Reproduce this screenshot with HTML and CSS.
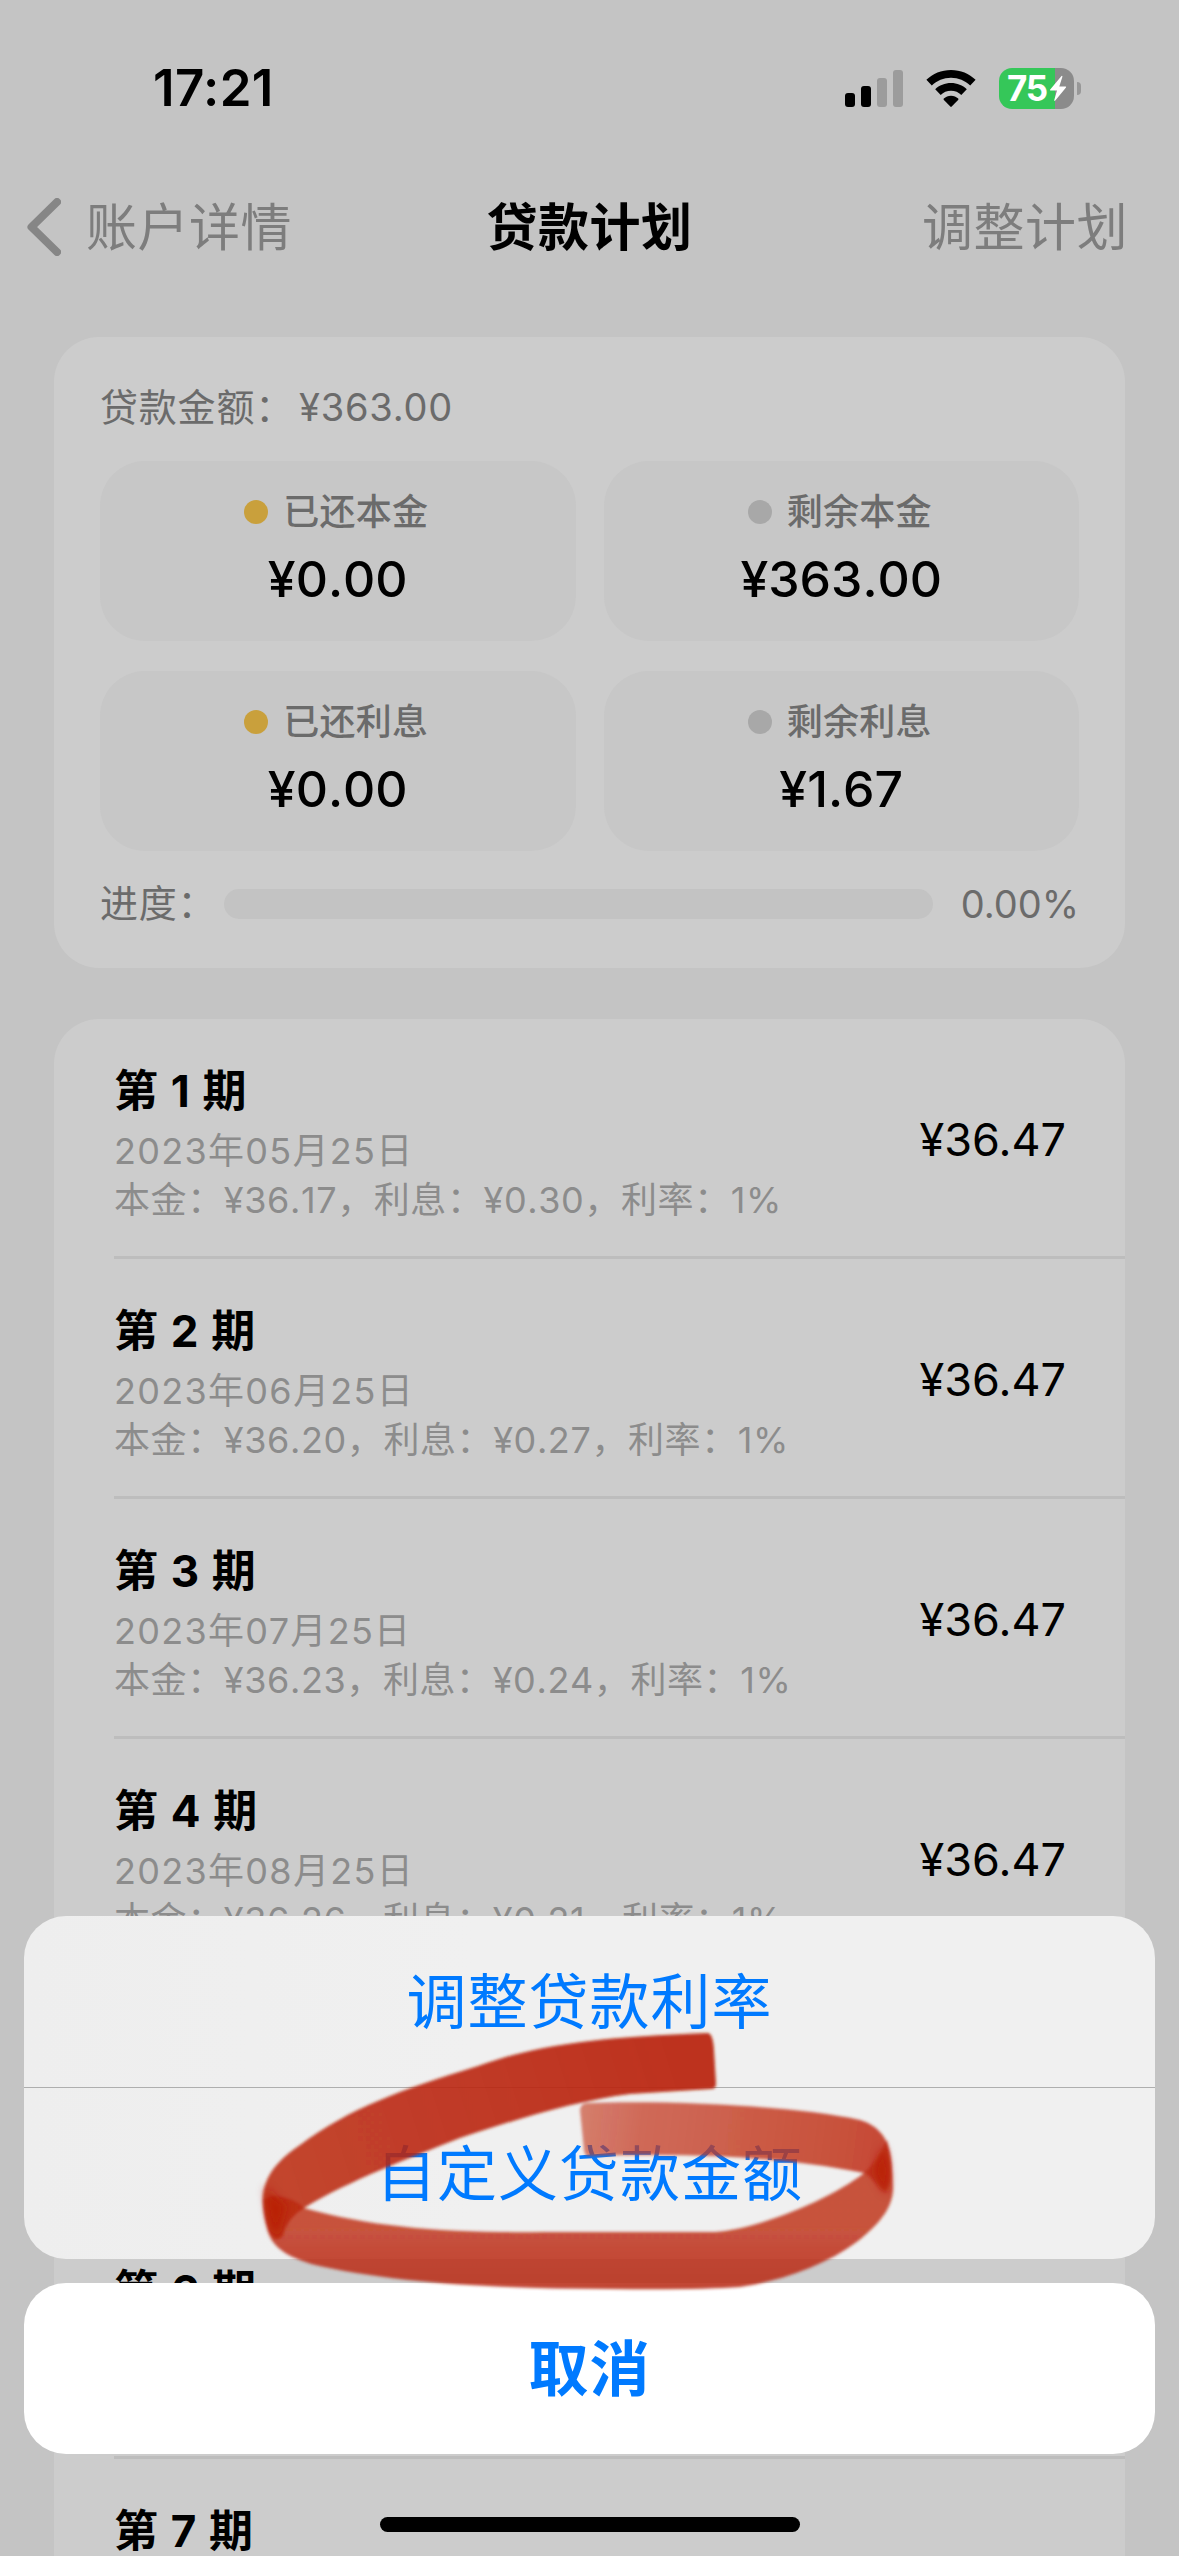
FILE: index.html
```html
<!DOCTYPE html>
<html lang="zh-CN">
<head>
<meta charset="utf-8">
<title>贷款计划</title>
<link rel="stylesheet" href="styles.css">
</head>
<body>
<div class="screen">
  <header class="status">
    <span class="clock">17:21</span>
    <div class="indicators">
      <svg class="signal" viewBox="0 0 58 37"><rect x="0" y="23" width="10" height="14" rx="3"/><rect x="16" y="16" width="10" height="21" rx="3"/><rect class="off" x="32" y="8" width="10" height="29" rx="3"/><rect class="off" x="48" y="0" width="10" height="37" rx="3"/></svg>
      <svg class="wifi" viewBox="0 0 50 37"><path d="M25 0C15.500 0 6.700 3.700.4 9.800L5.800 15.500C10.900 10.700 17.600 7.700 25 7.700S39.100 10.700 44.200 15.500L49.600 9.800C43.300 3.700 34.500 0 25 0Z"/><path d="M25 13C18.900 13 13.300 15.300 9.200 19.200L14.700 24.900C17.400 22.300 21 20.700 25 20.700S32.600 22.300 35.300 24.900L40.800 19.200C36.700 15.300 31.100 13 25 13Z"/><path d="M25 25.700C22.200 25.700 19.700 26.800 17.800 28.600Q17.300 29.200 17.900 29.900L24.300 36.600Q25 37.200 25.700 36.600L32.100 29.900Q32.700 29.200 32.200 28.600C30.300 26.800 27.800 25.700 25 25.700Z"/></svg>
      <div class="battery"><span class="cell"><span class="level">75</span><svg class="bolt" viewBox="0 0 18 26"><path d="M12.500 0.500L1 14.200Q.6 15 1.500 15H8L5.200 24.800Q5.300 26 6.300 25L17 12Q17.500 11 16.500 11H10.300L13.400 1.300Q13.500 0 12.500 .5Z"/></svg></span><span class="nub"></span></div>
    </div>
  </header>

  <nav class="nav">
    <div class="back"><svg class="chevron" viewBox="0 0 34 58"><path d="M30 4L4.500 29L30 54"/></svg><span>账户详情</span></div>
    <h1 class="title">贷款计划</h1>
    <span class="action">调整计划</span>
  </nav>

  <main class="content">
    <section class="card summary">
      <p class="total"><span class="name">贷款金额：</span>¥363.00</p>
      <div class="tiles">
        <div class="tile"><p class="label"><i class="dot paid"></i>已还本金</p><p class="value">¥0.00</p></div>
        <div class="tile"><p class="label"><i class="dot"></i>剩余本金</p><p class="value">¥363.00</p></div>
        <div class="tile"><p class="label"><i class="dot paid"></i>已还利息</p><p class="value">¥0.00</p></div>
        <div class="tile"><p class="label"><i class="dot"></i>剩余利息</p><p class="value">¥1.67</p></div>
      </div>
      <div class="progress"><span class="caption">进度：</span><span class="track"></span><span class="percent">0.00%</span></div>
    </section>

    <section class="card plan">
      <article class="term"><div><h2>第 1 期</h2><p class="date">2023年05月25日</p><p class="detail">本金：¥36.17，利息：¥0.30，利率：1%</p></div><span class="amount">¥36.47</span></article>
      <article class="term"><div><h2>第 2 期</h2><p class="date">2023年06月25日</p><p class="detail">本金：¥36.20，利息：¥0.27，利率：1%</p></div><span class="amount">¥36.47</span></article>
      <article class="term"><div><h2>第 3 期</h2><p class="date">2023年07月25日</p><p class="detail">本金：¥36.23，利息：¥0.24，利率：1%</p></div><span class="amount">¥36.47</span></article>
      <article class="term"><div><h2>第 4 期</h2><p class="date">2023年08月25日</p><p class="detail">本金：¥36.26，利息：¥0.21，利率：1%</p></div><span class="amount">¥36.47</span></article>
      <article class="term"></article>
      <article class="term"><div><h2>第 6 期</h2></div></article>
      <article class="term"><div><h2>第 7 期</h2></div></article>
    </section>
  </main>

  <div class="sheet">
    <div class="options">
      <button class="option">调整贷款利率</button>
      <button class="option">自定义贷款金额</button>
    </div>
    <button class="option cancel">取消</button>
  </div>

  <svg class="marker" viewBox="250 2020 660 280">
    <defs>
      <linearGradient id="fade" gradientUnits="userSpaceOnUse" x1="580" y1="2110" x2="885" y2="2150"><stop offset="0" stop-color="#c43a20" stop-opacity=".62"/><stop offset=".2" stop-color="#c43a20" stop-opacity=".74"/><stop offset="1" stop-color="#bf2f16" stop-opacity=".86"/></linearGradient>
      <linearGradient id="base" gradientUnits="userSpaceOnUse" x1="0" y1="2225" x2="0" y2="2290"><stop offset="0" stop-color="#bd2d14" stop-opacity=".8"/><stop offset=".35" stop-color="#bd2d14" stop-opacity=".85"/><stop offset="1" stop-color="#b82c14" stop-opacity=".88"/></linearGradient>
      <linearGradient id="rise" gradientUnits="userSpaceOnUse" x1="270" y1="2200" x2="712" y2="2060"><stop offset="0" stop-color="#bb280f" stop-opacity=".86"/><stop offset="1" stop-color="#b92408" stop-opacity=".93"/></linearGradient>
      <filter id="soft" x="-5%" y="-5%" width="110%" height="110%"><feGaussianBlur stdDeviation="1.7"/></filter>
      <filter id="softer" x="-60%" y="-20%" width="220%" height="140%"><feGaussianBlur stdDeviation="4"/></filter>
    </defs>
    <g filter="url(#soft)">
      <path fill="url(#fade)" d="M587 2103C680 2100 800 2107 860 2120C880 2126 889 2140 891 2158C893 2172 891 2184 886 2192C878 2190 874 2177 864 2173C780 2156 690 2153 588 2156Q585 2156 584 2150L580 2110Q581 2103 587 2103Z"/>
      <path fill="url(#base)" d="M887 2140Q893 2165 893 2188C893 2206 882 2222 858 2241C825 2266 780 2281 740 2287Q700 2290 610 2289C500 2289 390 2283 311 2264C280 2254 271 2244 267 2228L263 2200L274 2196Q294 2198 304 2208C380 2229 450 2233 560 2232L715 2232C755 2230 830 2200 864 2173Q876 2163 887 2140Z"/>
      <path fill="url(#rise)" d="M708 2033Q713 2034 714 2050L716 2084Q716 2089 711 2089L630 2094C580 2100 520 2118 460 2138C410 2158 350 2180 304 2208Q288 2217 282 2236Q274 2246 266 2224C257 2190 266 2168 300 2145C350 2108 400 2090 478 2066C540 2044 600 2037 708 2033Z"/>
    </g>
    <g filter="url(#softer)">
      <path class="overlap" d="M265 2186Q277 2200 286 2206Q280 2222 278 2236Q268 2230 265 2186Z"/>
      <path class="overlap" d="M884 2146Q892 2172 887 2194Q880 2188 874 2172Q876 2160 884 2146Z"/>
    </g>
  </svg>
  <div class="home"></div>
</div>
</body>
</html>
```
FILE: styles.css
```css
* { box-sizing: border-box; }
body, h1, h2, p { margin: 0; font-weight: 400; }
body { background: #c4c4c4; }
svg { display: block; }
.screen {
  position: relative;
  width: 1179px;
  height: 2556px;
  overflow: hidden;
  background: #c4c4c4;
  color: #000;
  font-family: Inter, "Noto Sans CJK SC", sans-serif;
}

/* Status bar */
.status { display: flex; justify-content: space-between; align-items: center; height: 176px; padding: 0 98px 0 153px; }
.clock { padding-bottom: 1px; font-size: 51px; font-weight: 600; letter-spacing: .4px; }
.indicators { display: flex; align-items: center; }
.signal { width: 58px; height: 37px; margin-right: 23px; }
.signal .off { fill: #9c9c9c; }
.wifi { width: 50px; height: 37px; margin-right: 23px; }
.battery { display: flex; align-items: center; gap: 3px; }
.cell { display: flex; align-items: center; width: 75px; height: 41px; padding-left: 8px; border-radius: 13px; background: linear-gradient(90deg, #35c759 75%, #8b8b8b 75%); }
.level { color: #fff; font-size: 35px; font-weight: 700; line-height: 41px; letter-spacing: -1.2px; }
.bolt { width: 18px; height: 27px; margin-left: 2px; fill: #fff; }
.nub { width: 4px; height: 13px; border-radius: 0 6px 6px 0; background: #979797; }

/* Navigation */
.nav { display: grid; grid-template-columns: 1fr auto 1fr; align-items: center; height: 102px; padding: 0 51px 0 27px; font-size: 51px; line-height: 74px; letter-spacing: .5px; color: #7d7d7d; }
.back { display: flex; align-items: center; gap: 25px; }
.back span, .action { padding-top: 2px; }
.chevron { width: 34px; height: 58px; fill: none; stroke: #868686; stroke-width: 8; stroke-linecap: round; stroke-linejoin: round; }
.title { margin-left: 24px; padding-top: 2px; font-size: 51px; font-weight: 700; color: #000; }
.action { text-align: right; }

/* Cards */
.content { padding: 59px 54px 0; }
.card { width: 1071px; border-radius: 45px; background: #ccc; }
.summary { height: 631px; padding: 42px 46px 0 46px; color: #6b6b6b; }
.total { height: 82px; font-size: 38px; line-height: 56px; letter-spacing: .8px; }
.name { margin-right: 5px; }
.tiles { display: grid; grid-template-columns: 1fr 1fr; gap: 30px 28px; }
.tile { height: 180px; padding-top: 24px; border-radius: 45px; background: #c7c7c7; text-align: center; }
.label { display: flex; align-items: center; justify-content: center; padding-right: 3px; font-size: 36px; font-weight: 500; line-height: 54px; letter-spacing: .2px; }
.dot { width: 24px; height: 24px; margin-right: 15px; border-radius: 50%; background: #a8a8a8; }
.dot.paid { background: #c9a03c; }
.value { color: #000; font-size: 50px; font-weight: 500; line-height: 80px; font-kerning: none; }
.progress { display: flex; align-items: center; height: 107px; font-size: 38px; line-height: 54px; }
.caption { width: 124px; padding-bottom: 4px; letter-spacing: .8px; }
.track { width: 709px; height: 30px; margin-bottom: 1px; border-radius: 15px; background: #c3c3c3; }
.percent { margin-left: auto; padding-bottom: 2px; }

/* Payment terms */
.plan { margin-top: 51px; }
.term { display: flex; justify-content: space-between; height: 240px; margin-left: 60px; padding: 48px 59px 0 0; border-bottom: 3px solid #bdbdbd; }
.term h2 { margin-bottom: 11px; font-size: 44px; font-weight: 700; line-height: 49px; letter-spacing: .4px; word-spacing: 1.5px; font-kerning: none; }
.date, .detail { color: #8c8c8c; font-size: 36px; line-height: 49px; }
.date { letter-spacing: 1.3px; }
.detail { letter-spacing: .6px; font-kerning: none; }
.amount { padding-top: 43px; font-size: 45px; line-height: 60px; }

/* Action sheet */
.sheet { position: absolute; left: 24px; right: 24px; top: 1916px; display: grid; gap: 24px; }
.options { overflow: hidden; border-radius: 42px; background: linear-gradient(90deg, #eee, #f0f0f0 40%); }
.option { display: block; width: 100%; height: 171px; padding: 2px 0 0; border: 0; background: none; color: #007aff; font: 400 60px/169px Inter, "Noto Sans CJK SC", sans-serif; letter-spacing: 1px; }
.option + .option { height: 172px; border-top: 1px solid #aeaeae; }
.cancel { border-radius: 42px; background: #fff; font-weight: 700; }

/* Hand-drawn highlight */
.marker { position: absolute; left: 250px; top: 2020px; width: 660px; height: 280px; }
.overlap { fill: #b81900; opacity: .75; }

.home { position: absolute; left: 380px; top: 2517px; width: 420px; height: 15px; border-radius: 8px; background: #000; }
```
